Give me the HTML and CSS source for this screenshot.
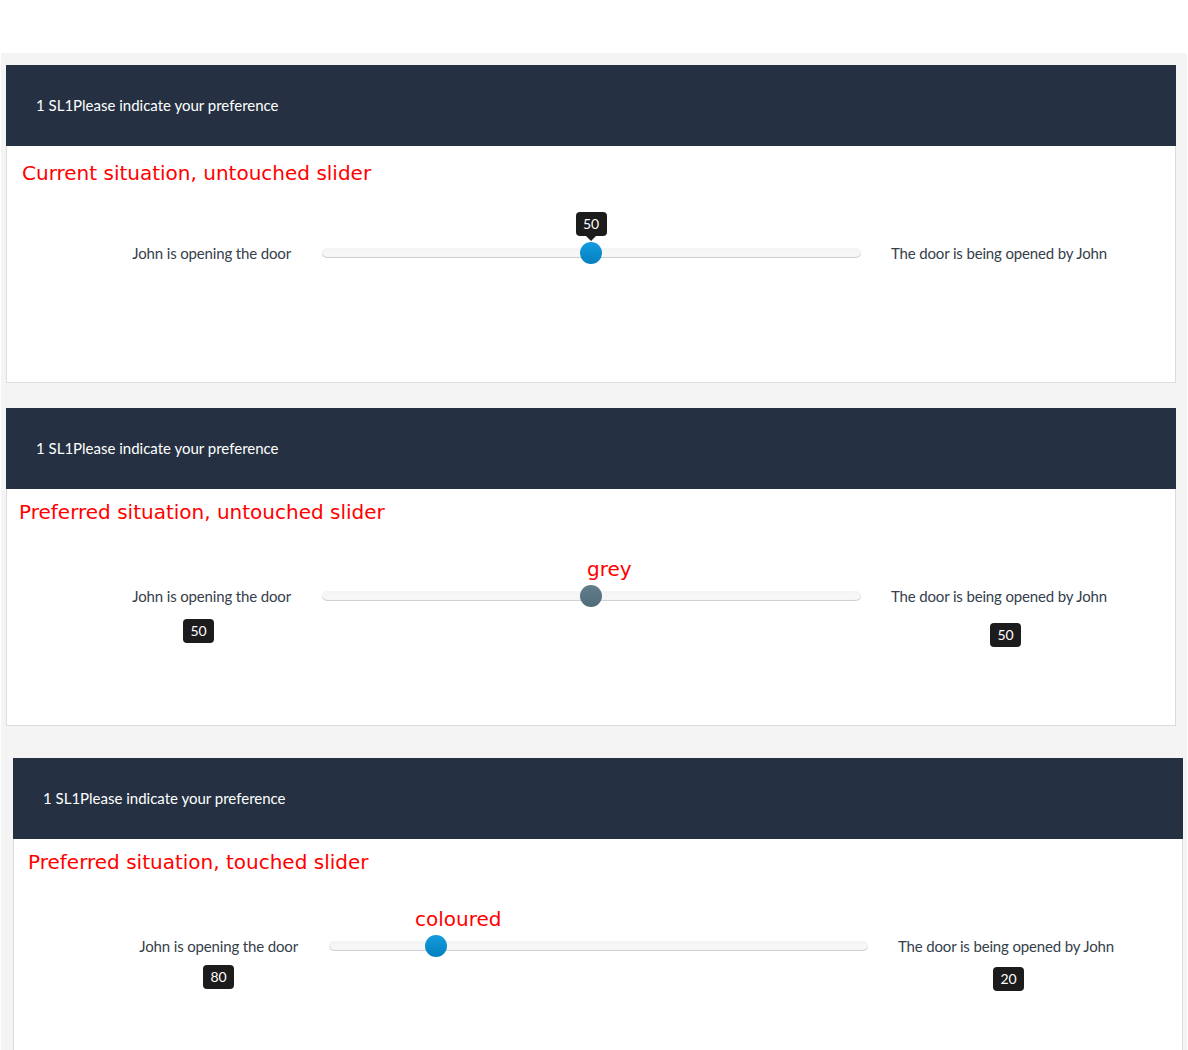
FILE: index.html
```html
<!DOCTYPE html>
<html lang="en">
<head>
    <meta charset="UTF-8">
    <title>Slider states</title>
    <link rel="stylesheet" href="styles.css">
</head>
<body>
    <div class="page">

        <div class="panel">
            <div class="panel-head">1 SL1Please indicate your preference</div>
            <div class="panel-body">
                <p class="note note-first">Current situation, untouched slider</p>
                <div class="row">
                    <div class="cell left">
                        <span class="label">John is opening the door</span>
                    </div>
                    <div class="slider">
                        <div class="track"></div>
                        <div class="thumb blue" style="left: 50%">
                            <span class="tip">50</span>
                        </div>
                    </div>
                    <div class="cell right">
                        <span class="label">The door is being opened by John</span>
                    </div>
                </div>
            </div>
        </div>

        <div class="panel">
            <div class="panel-head">1 SL1Please indicate your preference</div>
            <div class="panel-body">
                <p class="note">Preferred situation, untouched slider</p>
                <div class="row">
                    <div class="cell left">
                        <span class="label">John is opening the door</span>
                        <span class="value v-a">50</span>
                    </div>
                    <div class="slider">
                        <span class="remark r-grey">grey</span>
                        <div class="track"></div>
                        <div class="thumb grey" style="left: 50%"></div>
                    </div>
                    <div class="cell right">
                        <span class="label">The door is being opened by John</span>
                        <span class="value v-b">50</span>
                    </div>
                </div>
            </div>
        </div>

        <div class="panel panel-shift">
            <div class="panel-head">1 SL1Please indicate your preference</div>
            <div class="panel-body">
                <p class="note note-wide">Preferred situation, touched slider</p>
                <div class="row">
                    <div class="cell left">
                        <span class="label">John is opening the door</span>
                        <span class="value v-c">80</span>
                    </div>
                    <div class="slider">
                        <span class="remark r-colour">coloured</span>
                        <div class="track"></div>
                        <div class="thumb blue" style="left: 20%"></div>
                    </div>
                    <div class="cell right">
                        <span class="label">The door is being opened by John</span>
                        <span class="value v-d">20</span>
                    </div>
                </div>
            </div>
        </div>

    </div>
</body>
</html>
```

FILE: styles.css
```css
body {
    margin: 0;
    background: #fff;
    font-family: 'Lato', 'Liberation Sans', sans-serif;
}

.page {
    margin: 53px 1px 0 1px;
    padding: 12px 0 0 5px;
    background: #f4f4f4;
    min-height: 1000px;
}

.panel {
    width: 1170px;
    margin-bottom: 25px;
}

.panel-shift {
    margin-left: 7px;
    margin-top: 32px;
}

.panel-head {
    height: 81px;
    box-sizing: border-box;
    display: flex;
    align-items: center;
    padding: 0 0 2px 30px;
    background: #253142;
    color: #fff;
    font-size: 15px;
}

.panel-body {
    height: 237px;
    box-sizing: border-box;
    background: #fff;
    border: 1px solid #dcdcdc;
    border-top: none;
}

.note {
    margin: 0 0 62px 0;
    padding: 11px 0 0 12px;
    height: 24px;
    font-family: 'DejaVu Sans', sans-serif;
    font-size: 20px;
    line-height: 24px;
    color: #f00;
}

.note-first {
    padding: 15px 0 0 15px;
    margin-bottom: 58px;
}

.note-wide {
    padding-left: 14px;
}

.row {
    display: flex;
    align-items: flex-start;
    margin-left: 99px;
}

.cell {
    display: flex;
    flex-direction: column;
}

.left {
    width: 185px;
    align-items: flex-end;
}

.right {
    width: 230px;
    margin-left: 30px;
    align-items: flex-start;
}

.label {
    font-size: 15px;
    line-height: 20px;
    letter-spacing: -0.15px;
    color: #35404b;
    white-space: nowrap;
}

.value {
    width: 31px;
    height: 24px;
    line-height: 24px;
    text-align: center;
    background: #1c1c1c;
    color: #fff;
    border-radius: 4px;
    font-size: 14px;
}

.left .value {
    align-self: flex-start;
}

.v-a { margin: 13px 0 0 77px; }
.v-b { margin: 17px 0 0 99px; }
.v-c { margin: 9px 0 0 90px; }
.v-d { margin: 11px 0 0 95px; }

.slider {
    position: relative;
    width: 539px;
    height: 20px;
    margin-left: 31px;
    display: flex;
    align-items: center;
}

.track {
    width: 100%;
    height: 10px;
    border-radius: 5px;
    background: linear-gradient(#f4f4f4, #f9f9f9);
    box-shadow: inset 0 -1px 1px rgba(0,0,0,0.18);
}

.thumb {
    position: absolute;
    top: -1px;
    width: 22px;
    height: 22px;
    margin-left: -12px;
    border-radius: 50%;
}

.blue {
    background: linear-gradient(#149bdf, #0480be);
}

.grey {
    background: linear-gradient(#627d8b, #506b79);
}

/* value bubble over the handle */
.tip {
    position: absolute;
    bottom: 28px;
    left: -4px;
    width: 31px;
    height: 24px;
    line-height: 24px;
    text-align: center;
    background: #1c1c1c;
    color: #fff;
    border-radius: 4px;
    font-size: 14px;
}

.tip::after {
    content: "";
    position: absolute;
    left: 10px;
    bottom: -5px;
    border-left: 5px solid transparent;
    border-right: 5px solid transparent;
    border-top: 5px solid #1c1c1c;
}

.remark {
    position: absolute;
    bottom: 25px;
    font-family: 'DejaVu Sans', sans-serif;
    font-size: 20px;
    line-height: 24px;
    color: #f00;
}

.r-grey { left: 265px; }
.r-colour { left: 86px; }
```
